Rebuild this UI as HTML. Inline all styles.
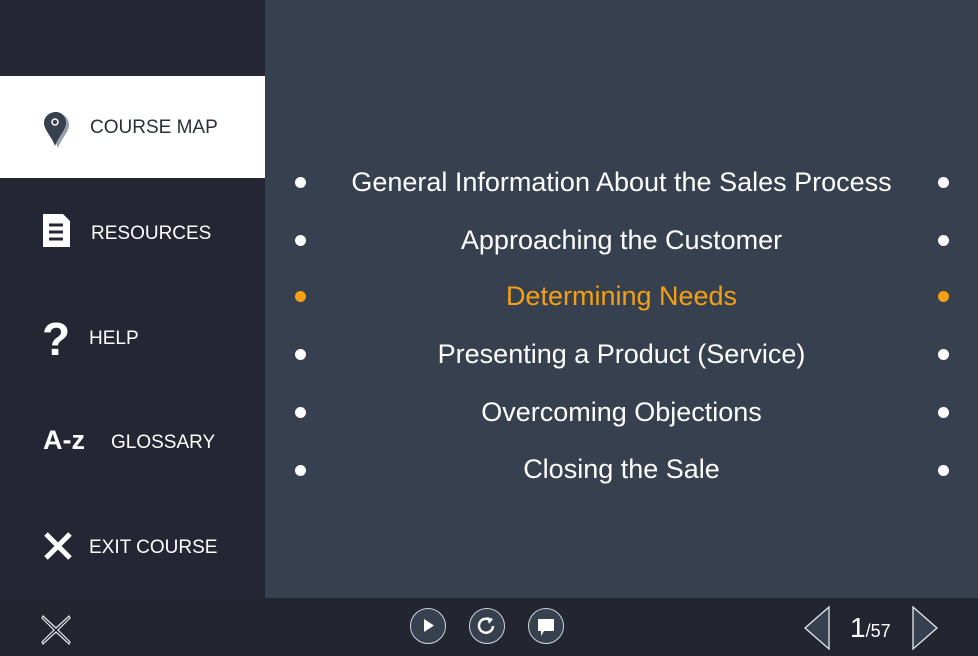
<!DOCTYPE html>
<html><head><style>
body{margin:0;width:978px;height:656px;background:#232631;position:relative;overflow:hidden;font-family:"Liberation Sans",sans-serif}
#side{position:absolute;left:0;top:0;width:265px;height:598px;background:#242733}
#main{position:absolute;left:265px;top:0;width:713px;height:598px;background:#36404f}
.item{position:absolute;left:0;width:265px;color:#fff;font-size:19px}
.item span{position:absolute}
#cm{top:76px;height:102px;background:#fff;color:#2b2f3a}
.line{position:absolute;left:265px;width:713px;text-align:center;color:#fff;font-size:27px;line-height:30px}
.dot{position:absolute;width:11px;height:11px;border-radius:50%;background:#fff}
.or{background:#f4a012}
.cb{position:absolute;top:608px;width:36px;height:36px;border:1.5px solid #cfd3da;border-radius:50%;background:#36404f;box-sizing:border-box}
</style></head><body>
<div id="side"></div><div id="main"></div>
<div class="item" id="cm">
 <svg style="position:absolute;left:42px;top:34px" width="30" height="40" viewBox="0 0 30 40"><path d="M15 3C8 3 3 8 3 14c0 7 8 14 11 23 3-9 11-16 11-23C25 8 21 3 15 3z" fill="#9aa0aa" transform="translate(2,1)"/><path d="M14 2C7 2 2 7 2 13c0 7 8 14 11 23 3-9 11-16 11-23C24 7 20 2 14 2z" fill="#36404f"/><circle cx="13" cy="12" r="3" fill="none" stroke="#fff" stroke-width="1.5"/></svg>
 <span style="left:90px;top:41px">COURSE MAP</span></div>
<div class="item" style="top:178px;height:106px">
 <svg style="position:absolute;left:43px;top:36px" width="28" height="34" viewBox="0 0 28 34"><path d="M0 0H20L27 7V33H0Z" fill="#fff"/><path d="M6 11H20M6 18H20M6 25H20" stroke="#242733" stroke-width="3"/></svg>
 <span style="left:91px;top:45px">RESOURCES</span></div>
<div class="item" style="top:300px"><span style="left:42px;top:12px;font-size:46px;font-weight:bold">?</span><span style="left:89px;top:28px">HELP</span></div>
<div class="item" style="top:405px"><span style="left:43px;top:20px;font-size:27px;font-weight:bold">A-z</span><span style="left:111px;top:27px">GLOSSARY</span></div>
<div class="item" style="top:510px">
 <svg style="position:absolute;left:43px;top:21px" width="30" height="30"><path d="M3 3L27 27M27 3L3 27" stroke="#fff" stroke-width="5"/></svg>
 <span style="left:89px;top:27px">EXIT COURSE</span></div>

<div class="line" style="top:167px">General Information About the Sales Process</div>
<div class="line" style="top:225px">Approaching the Customer</div>
<div class="line" style="top:281px;color:#f4a012">Determining Needs</div>
<div class="line" style="top:339px">Presenting a Product (Service)</div>
<div class="line" style="top:397px">Overcoming Objections</div>
<div class="line" style="top:454px">Closing the Sale</div>
<div class="dot" style="left:295px;top:177px"></div><div class="dot" style="left:938px;top:177px"></div>
<div class="dot" style="left:295px;top:235px"></div><div class="dot" style="left:938px;top:235px"></div>
<div class="dot or" style="left:295px;top:291px"></div><div class="dot or" style="left:938px;top:291px"></div>
<div class="dot" style="left:295px;top:349px"></div><div class="dot" style="left:938px;top:349px"></div>
<div class="dot" style="left:295px;top:407px"></div><div class="dot" style="left:938px;top:407px"></div>
<div class="dot" style="left:295px;top:465px"></div><div class="dot" style="left:938px;top:465px"></div>

<svg style="position:absolute;left:40px;top:614px" width="32" height="32"><path d="M3 2L16 14L29 2L30 4L18 16L30 28L29 30L16 18L3 30L2 28L14 16L2 4Z" fill="none" stroke="#e6e8ec" stroke-width="1.2"/></svg>
<div class="cb" style="left:410px"><svg width="33" height="33"><path d="M13 10L23 16.5L13 23Z" fill="#fff"/></svg></div>
<div class="cb" style="left:469px"><svg width="33" height="33"><path d="M20 11A7 7 0 1 0 23 17" fill="none" stroke="#fff" stroke-width="2.5"/><path d="M17 8L23 10L19 15Z" fill="#fff"/></svg></div>
<div class="cb" style="left:528px"><svg width="33" height="33"><path d="M9 10H25V22H15L12 27V22H9Z" fill="#fff"/></svg></div>
<svg style="position:absolute;left:802px;top:605px" width="30" height="46"><path d="M27 2L3 23L27 44Z" fill="#36404f" stroke="#e6e8ec" stroke-width="1.3"/></svg>
<div style="position:absolute;left:850px;top:612px;color:#fff;font-size:28px">1<span style="font-size:18px">/57</span></div>
<svg style="position:absolute;left:910px;top:605px" width="30" height="46"><path d="M3 2L27 23L3 44Z" fill="#36404f" stroke="#e6e8ec" stroke-width="1.3"/></svg>
</body></html>
